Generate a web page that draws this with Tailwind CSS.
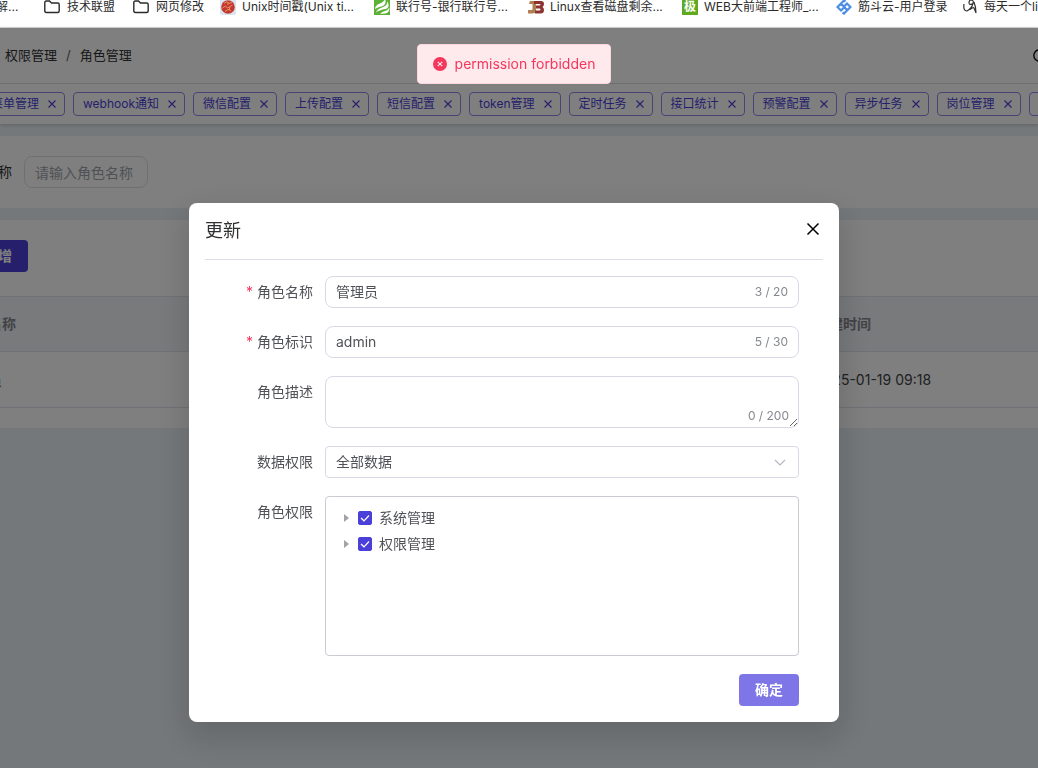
<!DOCTYPE html>
<html lang="zh-CN">
<head>
<meta charset="utf-8">
<title>角色管理</title>
<script src="https://cdn.jsdelivr.net/npm/@tailwindcss/browser@4"></script>
</head>
<body class="h-screen overflow-hidden bg-[#e9f1f6] font-['Inter','Noto_Sans_CJK_SC',sans-serif] text-sm text-[#505257]">
<svg class="hidden">
  <symbol id="x" viewBox="0 0 10 10"><path d="M1.5 1.5l7 7M8.500 1.500l-7 7" fill="none" stroke="currentColor" stroke-width="1.100"/></symbol>
  <symbol id="folder" viewBox="0 0 16 14"><path d="M.8 11V2.500Q.8 1 2.300 1H5.500L7.500 3H13.700Q15.200 3 15.200 4.500V11Q15.200 12.500 13.700 12.500H2.300Q.8 12.500 .8 11Z" fill="none" stroke="currentColor" stroke-width="1.400"/></symbol>
  <symbol id="caret" viewBox="0 0 5 8"><path d="M0 0L5 4L0 8Z" fill="currentColor"/></symbol>
</svg>

<nav aria-label="书签" class="flex h-7 items-start overflow-hidden border-b border-[#d5d5d5] bg-white text-xs text-[#2b2b2b] whitespace-nowrap *:flex *:h-3.5 *:shrink-0 *:items-center *:gap-1.5">
  <a href="#" class="-ml-1 w-12">解...</a>
  <a href="#" class="w-[89px]"><svg class="mr-px h-3.5 w-4 shrink-0"><use href="#folder"/></svg>技术联盟</a>
  <a href="#" class="w-[87px]"><svg class="mr-px h-3.5 w-4 shrink-0"><use href="#folder"/></svg>网页修改</a>
  <a href="#" class="w-[154px]"><svg class="size-4 shrink-0" viewBox="0 0 16 16"><rect width="16" height="16" rx="2" fill="#dbe4f2"/><circle cx="8" cy="8" r="6.800" fill="#c33a2c"/><path d="M4 4.500l3-2 2 2 3-1M2.500 9l3-2 2 2 5-3M5 12.500l3-2 3 1M8 3v3M10 8l-1 3" fill="none" stroke="#eb9a76" stroke-width=".9"/></svg>Unix时间戳(Unix ti...</a>
  <a href="#" class="w-[154px]"><svg class="size-4 shrink-0" viewBox="0 0 16 16"><rect width="16" height="16" fill="#5cb135"/><path d="M1 10Q1 6 6 4.500Q10 3 11 0Q13 5 9 7Q4 8 1 10ZM2 13.500Q3 10 8 8.500Q13 7 13.500 2.500Q16.500 8 11.500 10Q5 11 2 13.500ZM6 15Q8 12.500 11 12Q14 11 15.500 8.500Q15.500 14 11 14.500Z" fill="#fff"/></svg>联行号-银行联行号...</a>
  <a href="#" class="w-[154px]"><svg class="size-4 shrink-0" viewBox="0 0 16 16"><path d="M2 2H8V11Q8 14.500 4 14.500H0V11H3.500Q4.500 11 4.500 10V5H1Z" fill="#b08050"/><path fill-rule="evenodd" d="M6 2H13Q16 2 16 5Q16 7 14.500 8Q16 9 16 11Q16 14.500 12.500 14.500H7V11.500H11.500Q12.500 11.500 12.500 10.500Q12.500 9.500 11.500 9.500H8V6.500H11.500Q12.500 6.500 12.500 5.500Q12.500 5 11.500 5H6Z" fill="#8d3230"/></svg>Linux查看磁盘剩余...</a>
  <a href="#" class="w-[154px]"><span class="flex size-4 shrink-0 items-center justify-center bg-[#5faa1f] font-bold text-white">极</span>WEB大前端工程师_...</a>
  <a href="#" class="w-[127px]"><svg class="size-4 shrink-0" viewBox="0 0 16 16" fill="none" stroke="#4a8ee6" stroke-width="2.200"><path d="M9.500 2.500L8 1.500L1.500 8L5 11.500L8 8.500M6.500 13.500L8 14.500L14.500 8L11 4.500L8 7.500M4 4.500L6 6.500M5 4.500L11.500 11.500"/></svg>筋斗云-用户登录</a>
  <a href="#" class="w-[154px]"><svg class="mr-px h-4 w-3.5 shrink-0" viewBox="0 0 14 16" fill="none" stroke="#333" stroke-width="1.200"><path d="M1 5Q0 12 4 12Q8 10 10 5M6 3.500Q6 1 8.500 1Q11 1.500 10 4.500Q8 6 6.500 5Q6 4.500 6 3.500M11 3Q13 8 13 14M7 10.500Q10 8 11 9L13 14"/></svg>每天一个linux命令</a>
</nav>

<header class="overflow-hidden bg-white shadow-[0_1px_4px_rgba(0,21,41,0.2)]">
  <div class="flex h-14 items-center justify-between border-b border-[#d8dce5] pl-[5px] text-[13px] text-[#303133]">
    <nav aria-label="面包屑" class="flex gap-[9px]"><a href="#">权限管理</a><span class="text-[#606266]">/</span><span>角色管理</span></nav>
    <button aria-label="搜索" class="-mr-[9px]"><svg class="size-3.5" viewBox="0 0 14 14" fill="none" stroke="#000" stroke-width="1.300"><circle cx="6.500" cy="6.500" r="5.700"/><path d="M10.500 10.500L14 14"/></svg></button>
  </div>
  <div class="-ml-[19px] flex h-10 items-center gap-2 text-xs whitespace-nowrap text-[#4a3fd8] *:flex *:h-6 *:shrink-0 *:items-center *:gap-2 *:rounded-[4px] *:border *:border-[#8f88ea] *:pl-[9px] *:pr-[7px]">
    <button>菜单管理<svg class="size-2.5"><use href="#x"/></svg></button>
    <button>webhook通知<svg class="size-2.5"><use href="#x"/></svg></button>
    <button>微信配置<svg class="size-2.5"><use href="#x"/></svg></button>
    <button>上传配置<svg class="size-2.5"><use href="#x"/></svg></button>
    <button>短信配置<svg class="size-2.5"><use href="#x"/></svg></button>
    <button>token管理<svg class="size-2.5"><use href="#x"/></svg></button>
    <button>定时任务<svg class="size-2.5"><use href="#x"/></svg></button>
    <button>接口统计<svg class="size-2.5"><use href="#x"/></svg></button>
    <button>预警配置<svg class="size-2.5"><use href="#x"/></svg></button>
    <button>异步任务<svg class="size-2.5"><use href="#x"/></svg></button>
    <button>岗位管理<svg class="size-2.5"><use href="#x"/></svg></button>
    <button>角色管理<svg class="size-2.5"><use href="#x"/></svg></button>
  </div>
</header>

<main class="flex flex-col gap-3 overflow-hidden pt-3">
  <form class="-ml-11 flex h-[72px] items-center gap-3 bg-white text-[#303133]">
    <label for="q">角色名称</label>
    <input id="q" placeholder="请输入角色名称" class="h-8 w-[124px] rounded-lg border border-[#dcdfe6] px-[10px] placeholder:text-[#a0a3a9]">
  </form>
  <section class="-ml-10 bg-white pt-5 pb-5">
    <button class="ml-2 h-8 rounded-[4px] bg-[#4a3fd8] px-4 font-bold text-white">新增</button>
    <table class="mt-6 w-full table-fixed border-y border-[#dfe3ec] text-left">
      <thead><tr class="h-[55px] border-b border-[#dfe3ec] bg-[#f1f4f9] text-[#85888e]"><th class="w-[855px] font-bold">角色名称</th><th class="font-bold">创建时间</th></tr></thead>
      <tbody><tr class="h-14 text-[#404246]"><td>管理员</td><td>2025-01-19 09:18</td></tr></tbody>
    </table>
  </section>
</main>

<div class="fixed inset-x-0 top-7 bottom-0 flex items-start justify-center bg-black/50 pt-[175px] pr-[10px]">
  <div role="dialog" aria-labelledby="title" class="w-[650px] rounded-lg bg-white px-4 pb-4 shadow-[0_12px_32px_4px_rgba(0,0,0,0.15)]">
    <div class="flex h-[57px] items-center justify-between border-b border-[#dcdfe9]">
      <h2 id="title" class="text-lg text-[#303133]">更新</h2>
      <button aria-label="关闭" class="pr-[3px] pb-1 text-black"><svg class="size-3.5" viewBox="0 0 14 14"><path d="M1.500 1.500l11 11M12.500 1.500l-11 11" fill="none" stroke="currentColor" stroke-width="1.500"/></svg></button>
    </div>
    <form class="grid grid-cols-[108px_1fr] gap-x-3 gap-y-[18px] pt-4 pr-6">
      <label for="name" class="text-right leading-8"><span class="mr-1 text-[#f5365c]">*</span>角色名称</label>
      <div class="flex h-8 items-center rounded-lg border border-[#d8d9e6] px-[10px]"><input id="name" value="管理员" class="min-w-0 flex-1 outline-none"><span class="text-xs text-[#85888e]">3 / 20</span></div>
      <label for="code" class="text-right leading-8"><span class="mr-1 text-[#f5365c]">*</span>角色标识</label>
      <div class="flex h-8 items-center rounded-lg border border-[#d8d9e6] px-[10px]"><input id="code" value="admin" class="min-w-0 flex-1 outline-none"><span class="text-xs text-[#85888e]">5 / 30</span></div>
      <label for="desc" class="text-right leading-8">角色描述</label>
      <div class="relative"><textarea id="desc" class="block h-[52px] w-full rounded-lg border border-[#d8d9e6] px-[10px] py-1 outline-none"></textarea><span class="absolute right-[10px] bottom-1 text-xs text-[#85888e]">0 / 200</span></div>
      <label for="scope" class="text-right leading-8">数据权限</label>
      <div class="relative"><select id="scope" class="block h-8 w-full appearance-none rounded-[4px] border border-[#d8d9e6] bg-white px-[10px]"><option>全部数据</option></select><svg class="pointer-events-none absolute top-[13px] right-[13px] h-[7px] w-3" viewBox="0 0 12 7"><path d="M1 1l5 5 5-5" fill="none" stroke="#b4b7be" stroke-width="1.100"/></svg></div>
      <span class="text-right leading-8">角色权限</span>
      <ul class="h-40 rounded-[4px] border border-[#c9cad2] px-[18px] py-2 *:flex *:h-[26px] *:items-center">
        <li><svg class="mr-[9px] h-2 w-[5px] text-[#a0a3a9]"><use href="#caret"/></svg><label class="flex items-center gap-[7px]"><span class="grid place-items-center *:col-start-1 *:row-start-1"><input type="checkbox" checked class="size-3.5 appearance-none rounded-[2px] border border-[#4a3fd8] checked:bg-[#4a3fd8]"><svg class="pointer-events-none size-3.5" viewBox="0 0 14 14"><path d="M3 7l3 2.800L11 4.500" fill="none" stroke="#fff" stroke-width="1.200"/></svg></span>系统管理</label></li>
        <li><svg class="mr-[9px] h-2 w-[5px] text-[#a0a3a9]"><use href="#caret"/></svg><label class="flex items-center gap-[7px]"><span class="grid place-items-center *:col-start-1 *:row-start-1"><input type="checkbox" checked class="size-3.5 appearance-none rounded-[2px] border border-[#4a3fd8] checked:bg-[#4a3fd8]"><svg class="pointer-events-none size-3.5" viewBox="0 0 14 14"><path d="M3 7l3 2.800L11 4.500" fill="none" stroke="#fff" stroke-width="1.200"/></svg></span>权限管理</label></li>
      </ul>
      <div class="col-span-2 flex justify-end"><button type="button" class="h-8 rounded-[4px] bg-[#7e76e6] px-4 font-bold text-white">确定</button></div>
    </form>
  </div>
</div>

<div class="pointer-events-none fixed inset-x-0 top-11 flex justify-center pr-[10px]">
  <div role="alert" class="flex h-10 items-center gap-2 rounded-[4px] border border-[#fcd5dd] bg-[#fee9ed] px-[15px] text-[#f5365c]"><svg class="size-3.5" viewBox="0 0 14 14"><circle cx="7" cy="7" r="7" fill="currentColor"/><path d="M4.800 4.800l4.400 4.400M9.200 4.800l-4.400 4.400" stroke="#fee9ed" stroke-width="1.200"/></svg>permission forbidden</div>
</div>
</body>
</html>
